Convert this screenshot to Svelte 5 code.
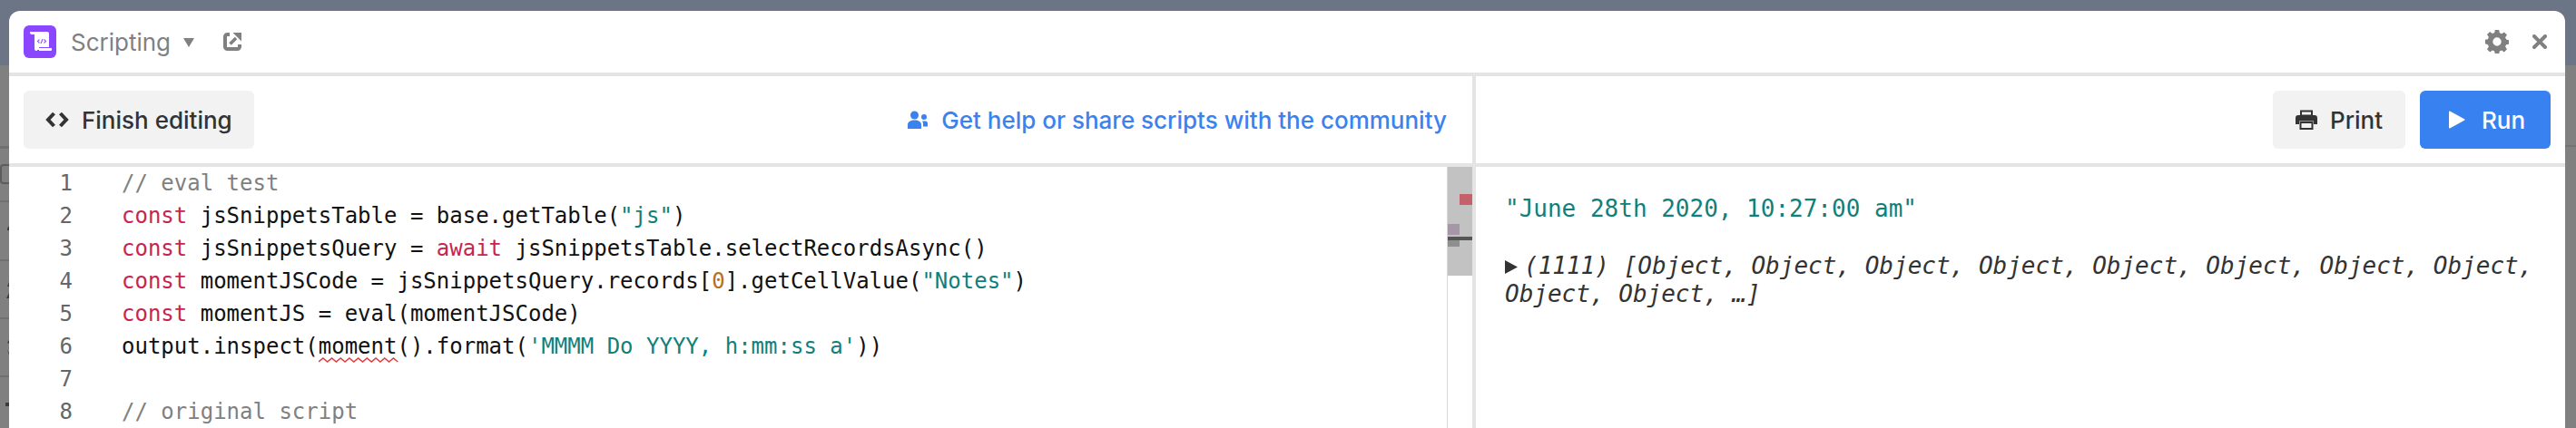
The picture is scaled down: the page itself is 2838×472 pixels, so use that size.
<script lang="ts">
  const CODE = [
    [['c', '// eval test']],
    [['k', 'const'], ['', ' jsSnippetsTable = base.getTable('], ['s', '"js"'], ['', ')']],
    [['k', 'const'], ['', ' jsSnippetsQuery = '], ['k', 'await'], ['', ' jsSnippetsTable.selectRecordsAsync()']],
    [['k', 'const'], ['', ' momentJSCode = jsSnippetsQuery.records['], ['n', '0'], ['', '].getCellValue('], ['s', '"Notes"'], ['', ')']],
    [['k', 'const'], ['', ' momentJS = eval(momentJSCode)']],
    [['', 'output.inspect('], ['e', 'moment'], ['', '().format('], ['s', "'MMMM Do YYYY, h:mm:ss a'"], ['', '))']],
    [],
    [['c', '// original script']],
  ];

  const objects = Array(10).fill('Object').join(', ');

  // wavy underline for the lint error, one hump every 9.7px
  const squiggle = 'M0 5' + ' l4.85 -4 l4.85 4'.repeat(9);
</script>

<!-- what shows of the page behind the modal -->
<svg class="behind" width="10" height="472" viewBox="0 0 10 472">
  <path d="M0 161h10v3H0zM0 221h10v2H0zM0 286h10v2H0zM0 350h10v2H0zM0 414h10v2H0z" fill="#707070" />
  <path d="M10 182H4a3 3 0 0 0-3 3v14a3 3 0 0 0 3 3h6" fill="none" stroke="#5c5c5c" stroke-width="2" />
  <path d="M8 252l2-3v5H8zM8 316l2-5v5zM7 329l3-6v6zM8 378l2-3v4zM8 386l2 3v2zM6 444h4v4H6z" fill="#3a3a3a" />
</svg>
<div class="backdrop-line"></div>

<main class="modal">
  <header class="titlebar">
    <div class="logo">
      <svg width="36" height="36" viewBox="0 0 36 36">
        <path d="M7 7h19a2 2 0 0 1 2 2v15h-2v3H15v1h-1a2 2 0 0 1-2-2V10H9a2 2 0 0 1-2-2z" fill="#fff" />
        <path d="M17 25h14v2a1 1 0 0 1-1 1H17z" fill="#fff" />
        <path d="M17 24h11v1H17z" fill="#8b46ff" />
        <path d="M17.500 15.500L15.500 17.500l2 2M22.500 15.500l2 2-2 2M21 15l-2 5" fill="none" stroke="#9a5cff" stroke-width="1.200" />
      </svg>
    </div>
    <span class="app-name">Scripting</span>
    <svg class="caret" width="12" height="10" viewBox="0 0 12 10"><path d="M0 0h12L6 10z" fill="#808080" /></svg>
    <svg class="popout" width="20" height="20" viewBox="0 0 20 20">
      <path d="M7 2H4.500A2.500 2.500 0 0 0 2 4.500v11A2.500 2.500 0 0 0 4.500 18h11a2.500 2.500 0 0 0 2.500-2.500V13" fill="none" stroke="#808080" stroke-width="4" />
      <path d="M7.500 12.500L14 6" stroke="#808080" stroke-width="3.500" />
      <path d="M10.500 0H20v9.500z" fill="#808080" />
    </svg>
    <div class="spacer"></div>
    <svg class="gear" width="26" height="26" viewBox="0 0 26 26">
      <path fill="#808080" fill-rule="evenodd" d="M10.800 0h4.400l.6 3.300 2.300 1 2.800-1.900 3.100 3.100-1.900 2.800 1 2.300 3.300.6v4.400l-3.300.6-1 2.300 1.900 2.800-3.100 3.100-2.800-1.900-2.300 1-.6 3.300h-4.400l-.6-3.300-2.300-1-2.800 1.900-3.100-3.100 1.900-2.800-1-2.300L-.4 15.200v-4.400l3.300-.6 1-2.300-1.900-2.800 3.100-3.100 2.800 1.900 2.300-1zM13 8.300a4.700 4.700 0 1 0 0 9.400 4.700 4.700 0 0 0 0-9.400z" />
    </svg>
    <svg class="close" width="16" height="16" viewBox="0 0 16 16">
      <path d="M2 2l12 12M14 2L2 14" stroke="#808080" stroke-width="4" stroke-linecap="round" />
    </svg>
  </header>

  <div class="panes">
    <section class="left">
      <div class="toolbar">
        <button class="btn">
          <svg width="26" height="18" viewBox="0 0 26 18">
            <path d="M9.500 2L3 9l6.500 7M16.500 2L23 9l-6.500 7" fill="none" stroke="#333" stroke-width="4" />
          </svg>
          Finish editing
        </button>
        <div class="spacer"></div>
        <span class="community">
          <svg width="22" height="20" viewBox="0 0 22 20">
            <circle cx="7.500" cy="5" r="4.500" fill="#3b82ee" />
            <path d="M0 20v-4.500C0 12.500 3 10.500 7.500 10.500S15 12.500 15 15.500V20z" fill="#3b82ee" />
            <circle cx="18" cy="7" r="3" fill="#3b82ee" />
            <path d="M16 11.500h3.500c1.500 0 2.500 1 2.500 2.500v3.500h-5v-2.500c0-1.500-.3-2.500-1-3.500z" fill="#3b82ee" />
          </svg>
          Get help or share scripts with the community
        </span>
      </div>

      <div class="editor">
        <div class="gutter">
          {#each CODE as _, i}
            <div>{i + 1}</div>
          {/each}
        </div>
        <div class="code">
          {#each CODE as line}
            <div class="line">
              {#each line as [kind, text]}
                {#if kind === 'e'}
                  <span class="err">{text}<svg class="squiggle" width="88" height="6" viewBox="0 0 88 6">
                      <path d={squiggle} fill="none" stroke="#e03a3a" stroke-width="1.500" />
                    </svg></span>
                {:else}
                  <span class={kind}>{text}</span>
                {/if}
              {/each}
            </div>
          {/each}
        </div>
        <div class="minimap">
          <div class="thumb">
            <i class="mark red"></i>
            <i class="mark purple"></i>
            <i class="mark dark"></i>
            <i class="mark grey"></i>
          </div>
        </div>
      </div>
    </section>

    <section class="right">
      <div class="toolbar end">
        <button class="btn print">
          <svg width="24" height="22" viewBox="0 0 24 22">
            <path d="M6 1.500h12v5H6z" fill="none" stroke="#333" stroke-width="2" />
            <path d="M3 6h18a3 3 0 0 1 3 3v7h-4v-3.500H4V16H0V9a3 3 0 0 1 3-3z" fill="#333" />
            <path d="M5.500 14h13v7h-13z" fill="none" stroke="#333" stroke-width="2" />
          </svg>
          Print
        </button>
        <button class="btn run">
          <svg width="18" height="20" viewBox="0 0 18 20"><path d="M0 1.500v17a1 1 0 0 0 1.500.8L17 10.800a1 1 0 0 0 0-1.600L1.500.7A1 1 0 0 0 0 1.500z" fill="#fff" /></svg>
          Run
        </button>
      </div>

      <div class="output">
        <p class="string">"June 28th 2020, 10:27:00 am"</p>
        <p class="inspect">
          <svg width="14" height="15" viewBox="0 0 14 15"><path d="M0 0l14 7.500L0 15z" fill="#333" /></svg><em>(1111) [{objects}, …]</em>
        </p>
      </div>
    </section>
  </div>
</main>

<style>
  :global(body) {
    margin: 0;
    height: 472px;
    overflow: hidden;
    background: linear-gradient(#6b7585 72px, #808080 72px);
    font-family: Inter, "Liberation Sans", sans-serif;
  }

  .behind {
    position: absolute;
    left: 0;
    top: 0;
  }

  .backdrop-line {
    position: absolute;
    right: 0;
    top: 160px;
    width: 12px;
    height: 2px;
    background: #737373;
  }

  .modal {
    position: relative;
    margin: 12px 12px 0 10px;
    height: 460px;
    background: #fff;
    border-radius: 12px 12px 0 0;
    overflow: hidden;
    display: flex;
    flex-direction: column;
  }

  .titlebar {
    height: 68px;
    flex: none;
    display: flex;
    align-items: center;
    padding: 0 20px 0 16px;
    border-bottom: 4px solid #e4e4e4;
  }

  .logo {
    width: 36px;
    height: 36px;
    border-radius: 6px;
    background: #8b46ff;
    display: flex;
  }

  .app-name {
    margin-left: 16px;
    font-size: 26px;
    color: #808080;
  }

  .caret {
    margin-left: 14px;
    margin-top: 2px;
  }

  .popout {
    margin-left: 32px;
  }

  .spacer {
    flex: 1;
  }

  .close {
    margin-left: 26px;
  }

  .panes {
    flex: 1;
    min-height: 0;
    display: flex;
  }

  .left {
    width: 1612px;
    flex: none;
    display: flex;
    flex-direction: column;
    border-right: 4px solid #e4e4e4;
  }

  .right {
    flex: 1;
    display: flex;
    flex-direction: column;
  }

  .toolbar {
    height: 96px;
    flex: none;
    display: flex;
    align-items: center;
    padding: 0 28px 0 16px;
    border-bottom: 4px solid #e4e4e4;
  }

  .toolbar.end {
    justify-content: flex-end;
    gap: 16px;
    padding-right: 16px;
  }

  .btn {
    height: 64px;
    border: none;
    border-radius: 6px;
    display: flex;
    align-items: center;
    font: 500 26px Inter, "Liberation Sans", sans-serif;
    background: #f2f2f2;
    color: #333;
    padding: 0 24px;
    gap: 14px;
  }

  .print {
    width: 146px;
    padding: 0 0 0 25px;
  }

  .run {
    width: 144px;
    padding: 0 0 0 32px;
    gap: 18px;
    background: #3782f0;
    color: #fff;
  }

  .community {
    display: flex;
    align-items: center;
    gap: 15px;
    font-size: 26px;
    font-weight: 500;
    color: #3b82ee;
  }

  .editor {
    flex: 1;
    min-height: 0;
    display: flex;
    overflow: hidden;
    font: 24px/36px "DejaVu Sans Mono", monospace;
    color: #111;
  }

  .gutter {
    width: 70px;
    flex: none;
    text-align: right;
    color: #666;
  }

  .code {
    flex: 1;
    padding-left: 54px;
    white-space: pre;
  }

  .line {
    height: 36px;
  }

  .c {
    color: #808080;
  }

  .k {
    color: #c7254e;
  }

  .s {
    color: #11807a;
  }

  .n {
    color: #b5701b;
  }

  .err {
    position: relative;
  }

  .squiggle {
    position: absolute;
    left: 0;
    bottom: -4px;
  }

  .minimap {
    width: 28px;
    flex: none;
    border-left: 1px solid #d8d8d8;
    box-sizing: border-box;
  }

  .thumb {
    position: relative;
    height: 120px;
    background: #c2c2c2;
  }

  .mark {
    position: absolute;
    display: block;
  }

  .red {
    left: 13px;
    top: 30px;
    width: 14px;
    height: 12px;
    background: #c4616a;
  }

  .purple {
    left: 0;
    top: 63px;
    width: 13px;
    height: 12px;
    background: #a795a8;
  }

  .dark {
    left: 0;
    top: 77px;
    width: 27px;
    height: 4px;
    background: #555;
  }

  .grey {
    left: 0;
    top: 81px;
    width: 13px;
    height: 7px;
    background: #8f8f8f;
  }

  .output {
    padding: 31px 32px 0;
    font: 26px/31px "DejaVu Sans Mono", monospace;
    color: #333;
  }

  .output p {
    margin: 0;
  }

  .string {
    color: #11807a;
  }

  .inspect {
    margin-top: 32px !important;
  }

  .inspect svg {
    margin-right: 7px;
  }
</style>
